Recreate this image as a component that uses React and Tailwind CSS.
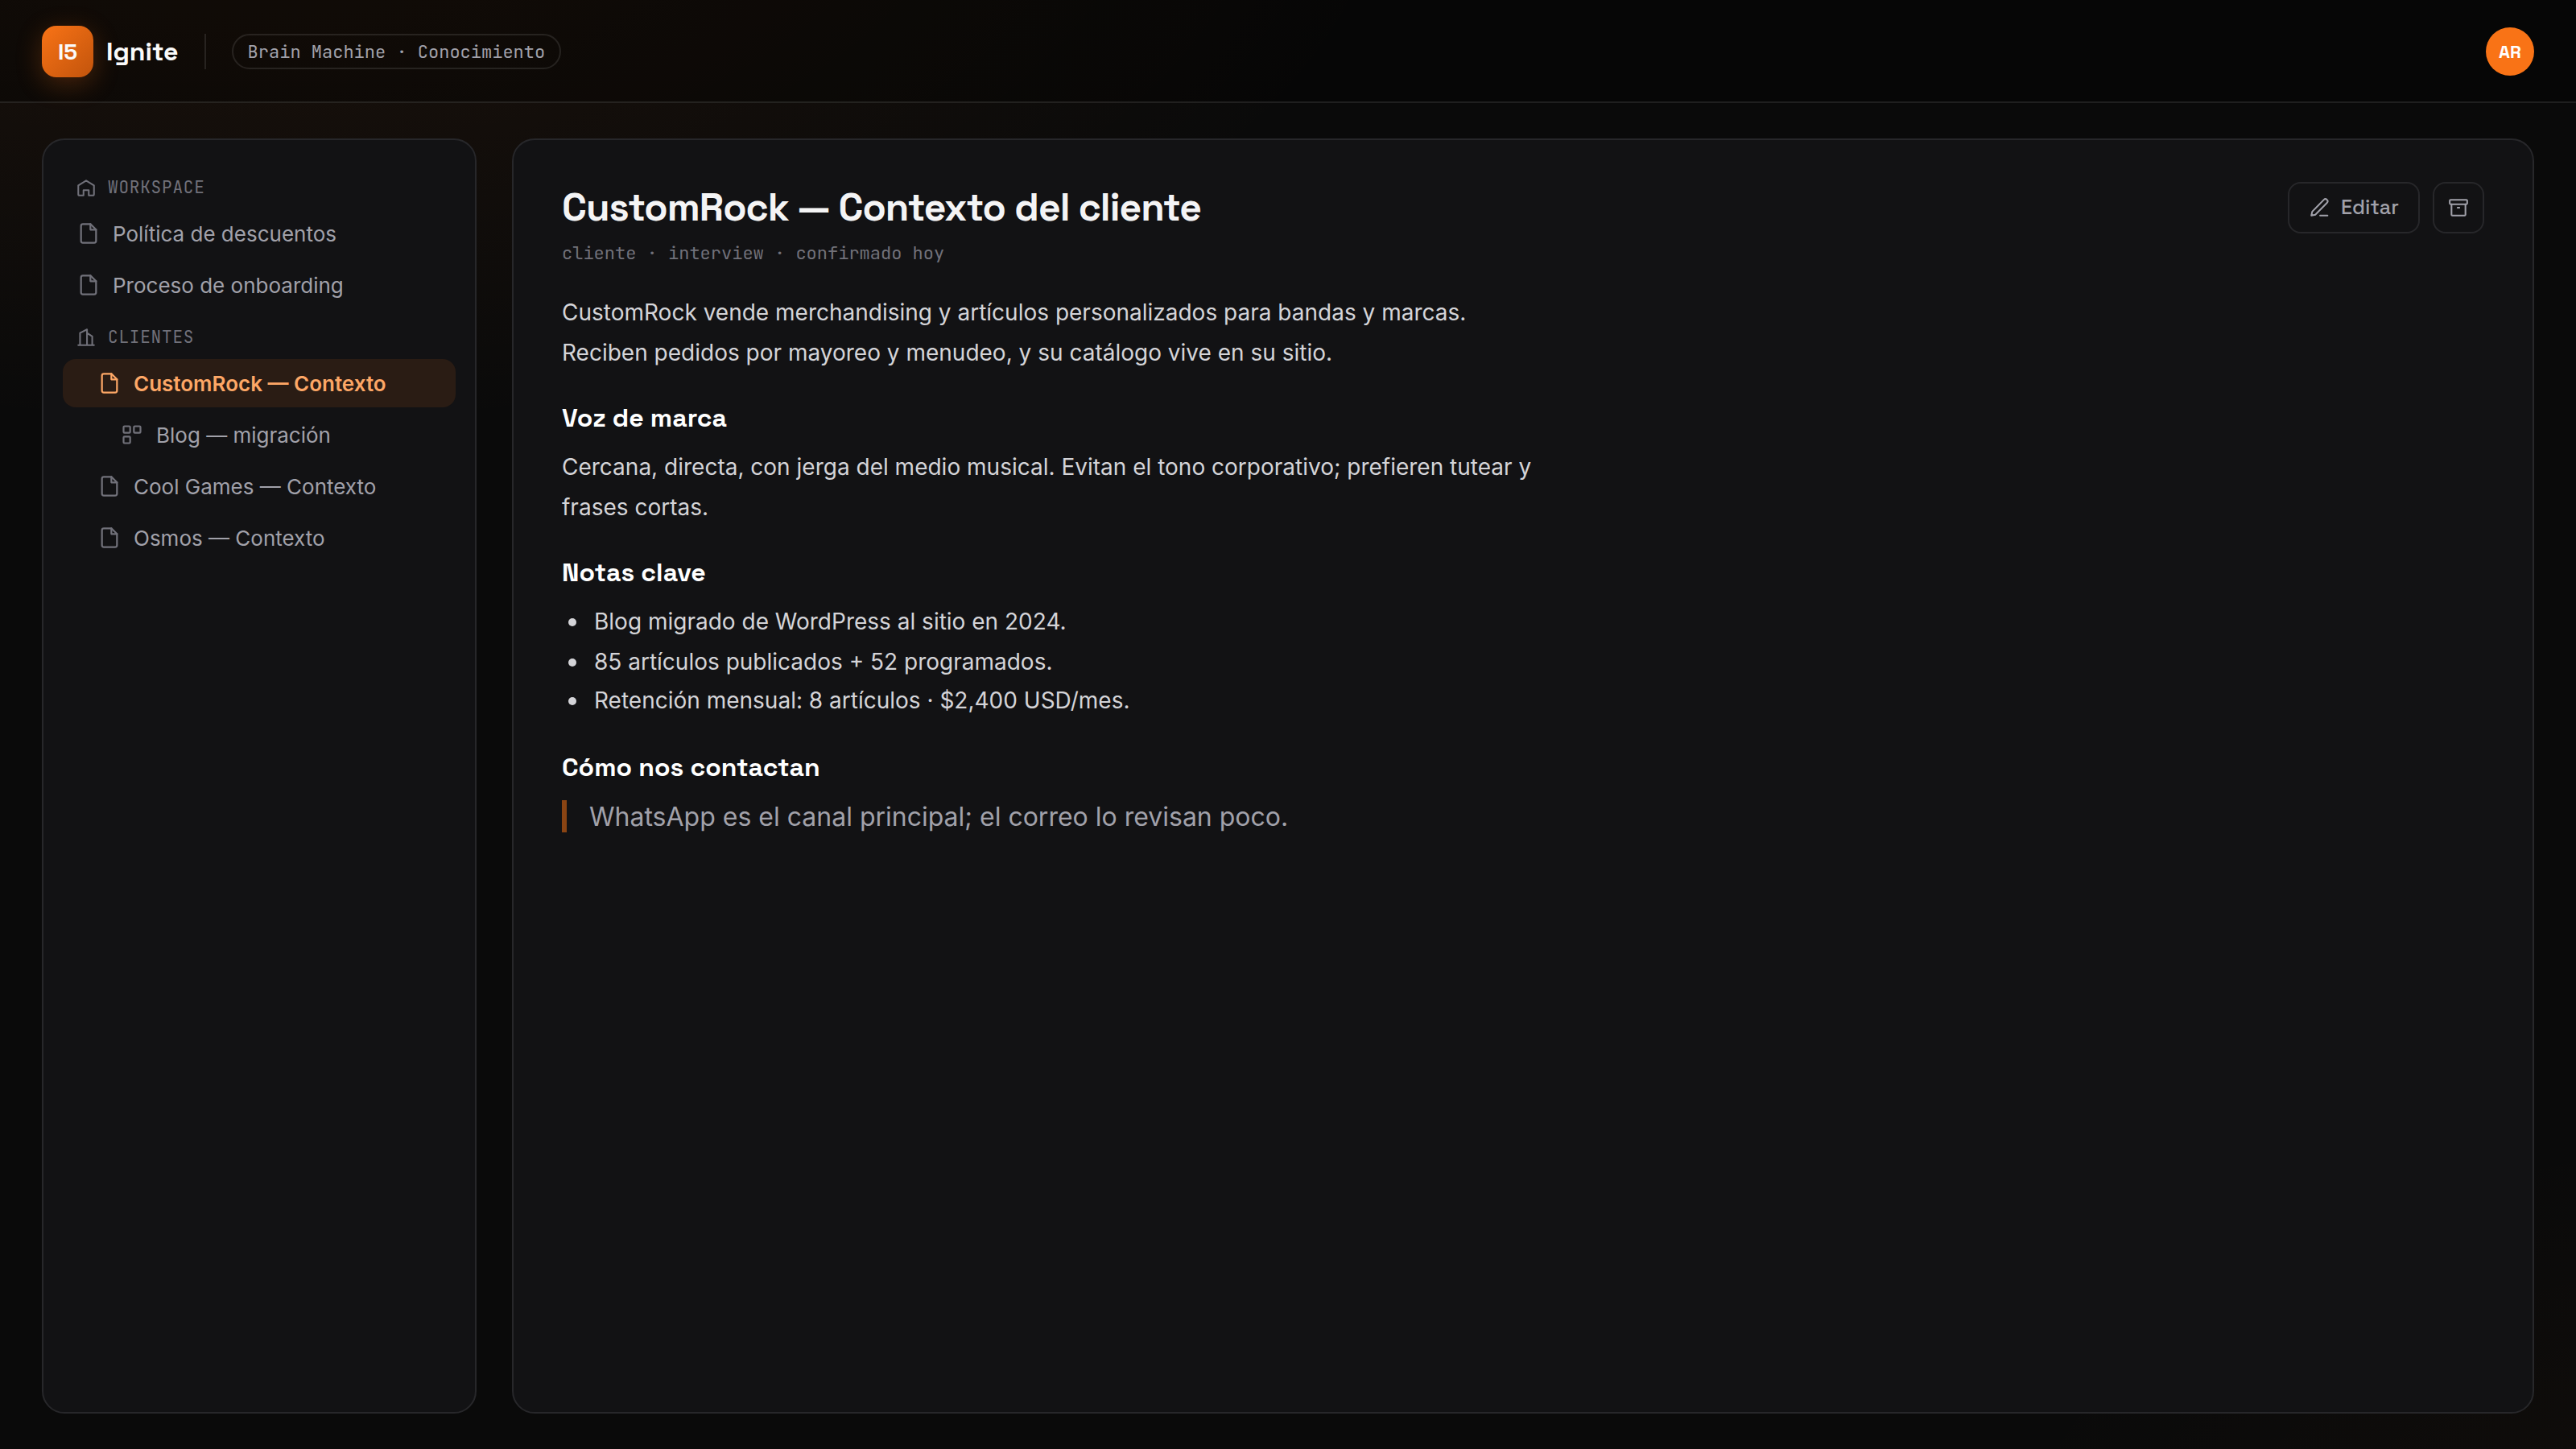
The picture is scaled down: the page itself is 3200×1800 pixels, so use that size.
const mono = "font-['JetBrains_Mono','DejaVu_Sans_Mono',monospace]";
const sg = "font-['Space_Grotesk','Inter',sans-serif]";

const svgProps = {
  viewBox: '0 0 24 24',
  fill: 'none',
  stroke: 'currentColor',
  strokeWidth: 1.9,
  strokeLinecap: 'round',
  strokeLinejoin: 'round',
};

function HomeIcon() {
  return (
    <svg {...svgProps} className="size-[26px] shrink-0">
      <path d="M3 9.500 12 4l9 5.500V19.500a1.500 1.500 0 0 1-1.500 1.500H15v-6H9v6H4.500A1.500 1.500 0 0 1 3 19.500z" />
    </svg>
  );
}

function BuildingIcon() {
  return (
    <svg {...svgProps} className="size-[26px] shrink-0">
      <path d="M3 21h18M5 21V7l8-4v18M19 21V11l-6-4" />
    </svg>
  );
}

function FileIcon() {
  return (
    <svg {...svgProps} className="size-7 shrink-0">
      <path d="M14 2H6a2 2 0 0 0-2 2v16a2 2 0 0 0 2 2h12a2 2 0 0 0 2-2V8z" />
      <path d="M14 2v6h6" />
    </svg>
  );
}

function BlocksIcon() {
  return (
    <svg {...svgProps} className="size-7 shrink-0">
      <rect x="3" y="3" width="7" height="7" rx="1" />
      <rect x="14" y="3" width="7" height="7" rx="1" />
      <rect x="3" y="14" width="7" height="7" rx="1" />
    </svg>
  );
}

function PenIcon() {
  return (
    <svg {...svgProps} className="size-[26px] shrink-0">
      <path d="M13 21h8.500" />
      <path d="M17.300 2.900a2.400 2.400 0 0 1 3.600 3.600L7.500 20 3 21l1-4.500z" />
    </svg>
  );
}

function ArchiveIcon() {
  return (
    <svg {...svgProps} className="size-[26px] shrink-0">
      <rect x="2" y="3" width="20" height="5" rx="1" />
      <path d="M4 8v12a1 1 0 0 0 1 1h14a1 1 0 0 0 1-1V8M11 12h2" />
    </svg>
  );
}

function Section({ icon, children }) {
  return (
    <div className={`flex items-center gap-3.5 px-4 text-[21px] leading-[26px] tracking-[0.800px] text-[#71717a] ${mono}`}>
      {icon}
      <span>{children}</span>
    </div>
  );
}

function Item({ icon, indent, active, children }) {
  return (
    <div className={`mb-1 flex h-[60px] items-center gap-4 rounded-2xl text-[26px] ${indent} ${active ? 'bg-[#2a1c14] font-semibold text-[#fda766]' : 'text-[#a1a1aa]'}`}>
      <span className={active ? 'text-[#fda766]' : 'text-[#71717a]'}>{icon}</span>
      <span>{children}</span>
    </div>
  );
}

function Bullet({ className = '', children }) {
  return (
    <li className={`flex items-center gap-[22px] pl-2 ${className}`}>
      <span className="size-2.5 shrink-0 rounded-full bg-[#d4d4d8]" />
      <span>{children}</span>
    </li>
  );
}

function Heading({ className, children }) {
  return <h2 className={`text-[32px] leading-[42px] font-bold text-white ${sg} ${className}`}>{children}</h2>;
}

export default function App() {
  return (
    <div className="flex h-[1800px] w-[3200px] flex-col bg-[#0a0a0a] bg-[radial-gradient(2400px_1200px_at_10%_-10%,rgba(249,115,22,0.080),transparent_60%),radial-gradient(1800px_1000px_at_110%_110%,rgba(249,115,22,0.035),transparent_60%)] font-['Inter',sans-serif] text-[#fafafa]">
      <header className="flex h-32 shrink-0 items-center border-b-2 border-white/10 bg-black/30 px-[52px] pt-0.5">
        <div className={`flex size-16 items-center justify-center rounded-[18px] bg-linear-135 from-[#f97316] to-[#c2540c] text-[28px] font-bold shadow-[0_8px_32px_rgba(249,115,22,0.250)] ${sg}`}>I5</div>
        <div className={`ml-4 text-[32px] font-bold ${sg}`}>Ignite</div>
        <div className="ml-8 h-11 w-0.5 bg-white/10" />
        <div className={`ml-8 flex h-11 items-center rounded-full border-2 border-white/10 px-[18px] text-[22px] text-[#a1a1aa] ${mono}`}>Brain Machine · Conocimiento</div>
        <div className={`ml-auto flex size-[60px] items-center justify-center rounded-full bg-[#f97316] text-[22px] font-bold text-white ${sg}`}>AR</div>
      </header>
      <main className="flex flex-1 gap-11 px-[52px] py-11">
        <aside className="w-[540px] shrink-0 rounded-[28px] border-2 border-[#27272a] bg-[#121214] px-6 pt-[46px]">
          <Section icon={<HomeIcon />}>WORKSPACE</Section>
          <div className="mt-3.5">
            <Item icon={<FileIcon />} indent="pl-[18px]">Política de descuentos</Item>
            <Item icon={<FileIcon />} indent="pl-[18px]">Proceso de onboarding</Item>
          </div>
          <div className="mt-[22px]">
            <Section icon={<BuildingIcon />}>CLIENTES</Section>
          </div>
          <div className="mt-3.5">
            <Item icon={<FileIcon />} indent="pl-11" active>CustomRock — Contexto</Item>
            <Item icon={<BlocksIcon />} indent="pl-[72px]">Blog — migración</Item>
            <Item icon={<FileIcon />} indent="pl-11">Cool Games — Contexto</Item>
            <Item icon={<FileIcon />} indent="pl-11">Osmos — Contexto</Item>
          </div>
        </aside>
        <section className="flex-1 rounded-[28px] border-2 border-[#27272a] bg-[#121214] px-[60px] pt-[52px]">
          <div className="flex items-start justify-between">
            <div className="pt-px">
              <h1 className={`text-[48px] leading-[62px] font-bold tracking-[-0.960px] text-[#f4f4f5] ${sg}`}>CustomRock — Contexto del cliente</h1>
              <p className={`mt-2.5 text-[22px] leading-[32px] text-[#71717a] ${mono}`}>cliente · interview · confirmado hoy</p>
            </div>
            <div className={`flex gap-4 text-[#a1a1aa] ${sg}`}>
              <button className="flex h-16 w-[164px] items-center justify-center gap-3.5 rounded-2xl border-2 border-[#27272a] text-[25px] font-medium"><PenIcon />Editar</button>
              <button className="flex size-16 items-center justify-center rounded-2xl border-2 border-[#27272a]"><ArchiveIcon /></button>
            </div>
          </div>
          <article className="mt-[33px] w-[1240px] text-[28px] leading-[49px] text-[#d4d4d8]">
            <p>CustomRock vende merchandising y artículos personalizados para bandas y marcas. <span className="mt-px -mb-px block">Reciben pedidos por mayoreo y menudeo, y su catálogo vive en su sitio.</span></p>
            <Heading className="mt-9">Voz de marca</Heading>
            <p className="mt-4">Cercana, directa, con jerga del medio musical. Evitan el tono corporativo; prefieren tutear y <span className="mt-px -mb-px block">frases cortas.</span></p>
            <Heading className="mt-9">Notas clave</Heading>
            <ul className="mt-4">
              <Bullet>Blog migrado de WordPress al sitio en 2024.</Bullet>
              <Bullet className="mt-px -mb-px">85 artículos publicados + 52 programados.</Bullet>
              <Bullet>Retención mensual: 8 artículos · $2,400 USD/mes.</Bullet>
            </ul>
            <Heading className="mt-[37px]">Cómo nos contactan</Heading>
            <blockquote className="mt-5 h-10 border-l-[6px] border-[#8a4413] pl-7 text-[32px] leading-[42px] text-[#a1a1aa]">WhatsApp es el canal principal; el correo lo revisan poco.</blockquote>
          </article>
        </section>
      </main>
    </div>
  );
}
